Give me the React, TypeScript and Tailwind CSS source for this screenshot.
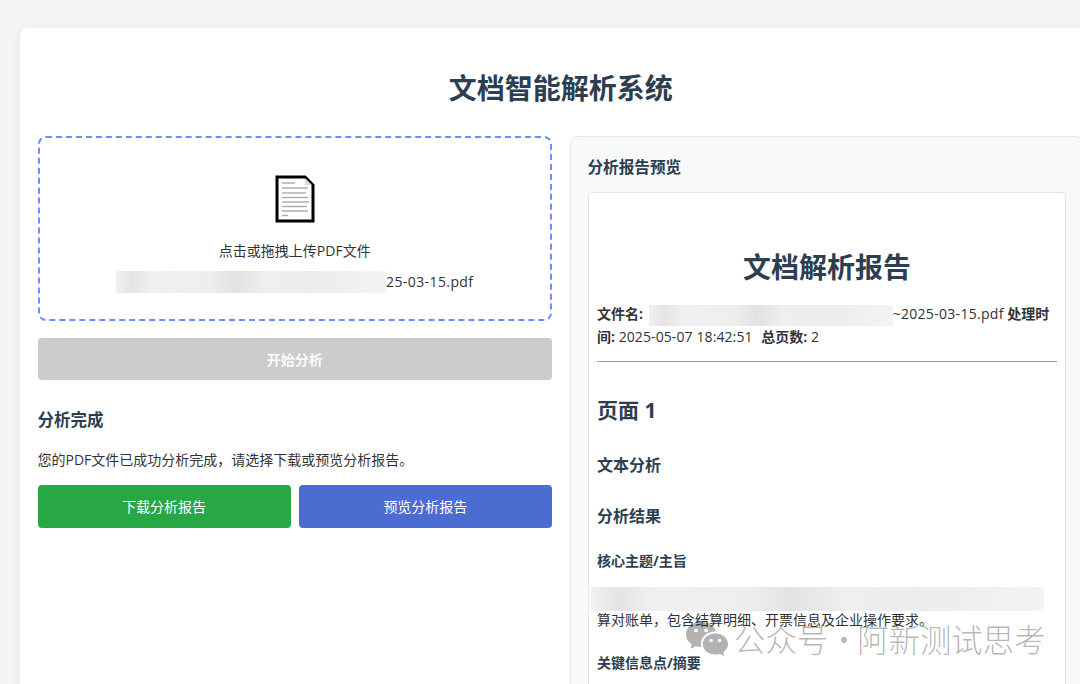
import React from "react";
import { RiWechatFill } from "react-icons/ri";

const blurBg =
  "bg-[linear-gradient(90deg,#f1f1f1_0%,#e4e4e4_6%,#f0f0f0_14%,#eeeeee_35%,#e2e2e2_44%,#efefef_56%,#ececec_72%,#f3f3f3_100%)]";

const DocIcon = () => (
  <svg width="40" height="48" viewBox="0 0 40 48" className="block">
    <path d="M2 2 H30 L38 10 V46 H2 Z" fill="#fff" stroke="#000" strokeWidth="3" strokeLinejoin="miter" />
    <path d="M30 3 V10 H37 Z" fill="#ddd" />
    <g stroke="#aaa" strokeWidth="1.4">
      <line x1="7" y1="8" x2="20" y2="8" />
      <line x1="7" y1="13" x2="33" y2="13" />
      <line x1="7" y1="18" x2="31" y2="18" />
      <line x1="7" y1="22.5" x2="33" y2="22.5" />
      <line x1="7" y1="27" x2="34" y2="27" />
      <line x1="7" y1="31.500" x2="32" y2="31.500" />
      <line x1="7" y1="36" x2="33" y2="36" />
      <line x1="7" y1="40.500" x2="13" y2="40.500" />
    </g>
  </svg>
);

export default function App() {
  return (
    <div className="relative h-[684px] overflow-hidden bg-[#f5f5f5] pt-[28px] pl-[20px] font-['Open_Sans','Noto_Sans_CJK_SC',sans-serif] text-[14px] text-[#333]">
      <div className="w-[1082px] h-[700px] rounded-[8px] bg-white pl-[17.5px] pr-[18px] shadow-[0_2px_10px_rgba(0,0,0,0.08)]">
        <h1 className="pt-[40px] pb-[28px] text-center text-[28px] leading-[40px] font-bold text-[#2c3e50]">
          文档智能解析系统
        </h1>

        <div className="flex gap-[18px] items-start">
          {/* left column */}
          <div className="w-[514.5px] shrink-0">
            <div className="h-[185px] rounded-[8px] border-2 border-dashed border-[#6a8dff] flex flex-col items-center pt-[37px]">
              <DocIcon />
              <p className="mt-[18px] leading-[20px]">点击或拖拽上传PDF文件</p>
              <p className="mt-[10px] leading-[22px] flex items-center">
                <span className={`inline-block w-[270px] h-[22px] ${blurBg}`} />
                <span className="tracking-[0.4px]">25-03-15.pdf</span>
              </p>
            </div>

            <button className="mt-[17px] w-full h-[42px] rounded-[4px] bg-[#cccccc] text-white/90 font-bold">
              开始分析
            </button>

            <h3 className="mt-[28px] text-[16.5px] leading-[24px] font-bold text-[#2c3e50]">分析完成</h3>
            <p className="mt-[17px] leading-[22px]">您的PDF文件已成功分析完成，请选择下载或预览分析报告。</p>

            <div className="mt-[14px] flex gap-[8px]">
              <button className="flex-1 h-[43px] rounded-[4px] bg-[#28a745] text-white">下载分析报告</button>
              <button className="flex-1 h-[43px] rounded-[4px] bg-[#4b6cd0] text-white">预览分析报告</button>
            </div>
          </div>

          {/* right column */}
          <div className="w-[514px] shrink-0 h-[600px] rounded-[8px] border border-[#e4e6e9] bg-[#f8f9fa] pl-[17px] pr-[17px] pt-[18px]">
            <h3 className="text-[15.6px] leading-[24px] font-bold text-[#2c3e50] -ml-[0.5px]">分析报告预览</h3>
            <div className="mt-[13px] h-[520px] w-[478px] rounded-[4px] border border-[#e4e6e9] bg-white px-[8px]">
              <h1 className="pt-[54px] text-center text-[28px] leading-[40px] font-bold text-[#2c3e50]">
                文档解析报告
              </h1>
              <p className="mt-[16px] leading-[22px]">
                <strong>文件名:</strong>{" "}
                <span className={`inline-block align-middle ml-[2px] w-[244px] h-[21px] ${blurBg}`} />
                <span className="tracking-[0.3px]">~2025-03-15.pdf</span> <strong>处理时间:</strong>{" "}
                <span className="tracking-[0.1px]">2025-05-07 18:42:51</span>{" "}
                <strong className="ml-[5px]">总页数:</strong> <span>2</span>
              </p>
              <hr className="mt-[13px] border-t border-[#999]" />
              <h2 className="mt-[34px] text-[21px] leading-[28px] font-bold text-[#2c3e50]">页面 1</h2>
              <h3 className="mt-[29px] text-[16px] leading-[24px] font-bold text-[#2c3e50]">文本分析</h3>
              <h3 className="mt-[27px] text-[16px] leading-[24px] font-bold text-[#2c3e50]">分析结果</h3>
              <h4 className="mt-[21px] text-[14px] leading-[24px] font-bold text-[#2c3e50]">核心主题/主旨</h4>
              <div className={`-ml-[6px] mt-[14px] w-[453px] h-[24px] ${blurBg}`} />
              <p className="-mt-[3px] leading-[24px]">算对账单，包含结算明细、开票信息及企业操作要求。</p>
              <h4 className="mt-[19px] text-[14px] leading-[24px] font-bold text-[#2c3e50]">关键信息点/摘要</h4>
            </div>
          </div>
        </div>
      </div>

      {/* watermark */}
      <div className="absolute left-[684px] top-[616px] flex items-center text-[#000]/30 font-['Noto_Sans_CJK_SC',sans-serif] text-[31.4px] leading-[46px] font-light whitespace-nowrap">
        <RiWechatFill className="text-[#000]/30 mr-[6px]" size={46} />
        <span className="-ml-[2px]">公众号</span>
        <span className="w-[29px] text-center">·</span>
        <span>阿新测试思考</span>
      </div>
    </div>
  );
}
